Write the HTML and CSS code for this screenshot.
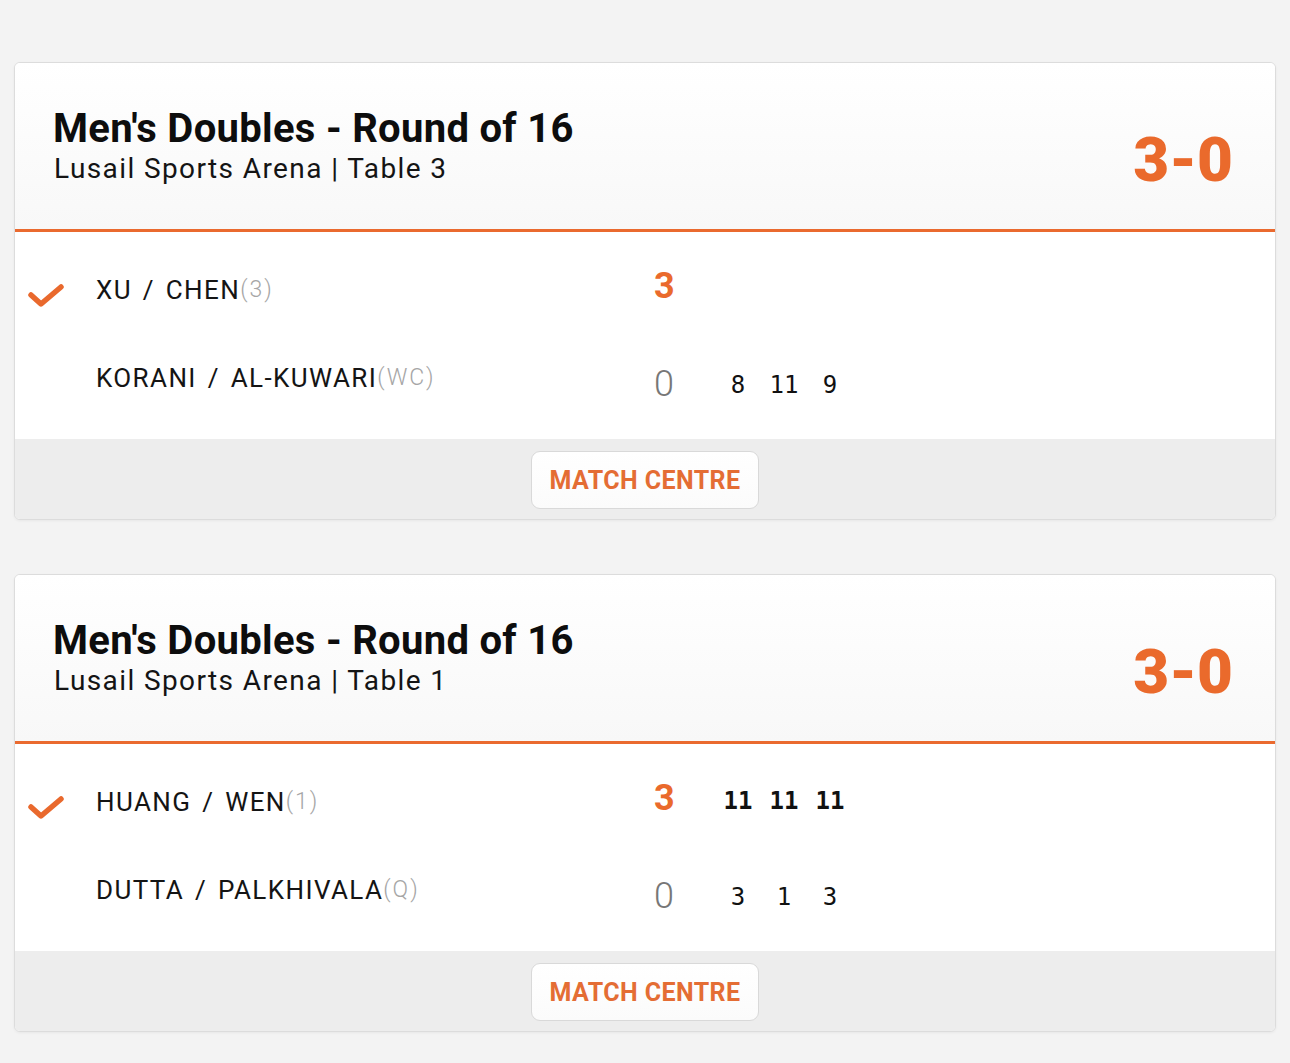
FILE: index.html
```html
<!DOCTYPE html>
<html lang="en">
<head>
<meta charset="utf-8">
<title>Match results</title>
<link rel="stylesheet" href="styles.css">
</head>
<body>
<main class="list">
  <article class="card">
    <header class="card-head">
      <div class="titles">
        <h2 class="title">Men's Doubles - Round of 16</h2>
        <p class="venue">Lusail Sports Arena | Table 3</p>
      </div>
      <div class="final">3-0</div>
    </header>
    <section class="card-body">
      <div class="row win">
        <div class="mark"><svg class="check" viewBox="0 0 36 26" width="36" height="26"><path d="M3 12 L13 21 L33 4" fill="none" stroke="#e9692d" stroke-width="5.5" stroke-linecap="round" stroke-linejoin="round"/></svg></div>
        <div class="name">XU / CHEN<span class="seed">(3)</span></div>
        <div class="total">3</div>
        <div class="sets"></div>
      </div>
      <div class="row lose">
        <div class="mark"></div>
        <div class="name">KORANI / AL-KUWARI<span class="seed">(WC)</span></div>
        <div class="total">0</div>
        <div class="sets"><span class="set">8</span><span class="set">11</span><span class="set">9</span></div>
      </div>
    </section>
    <footer class="card-foot"><a class="btn" href="#">MATCH CENTRE</a></footer>
  </article>

  <article class="card">
    <header class="card-head">
      <div class="titles">
        <h2 class="title">Men's Doubles - Round of 16</h2>
        <p class="venue">Lusail Sports Arena | Table 1</p>
      </div>
      <div class="final">3-0</div>
    </header>
    <section class="card-body">
      <div class="row win">
        <div class="mark"><svg class="check" viewBox="0 0 36 26" width="36" height="26"><path d="M3 12 L13 21 L33 4" fill="none" stroke="#e9692d" stroke-width="5.5" stroke-linecap="round" stroke-linejoin="round"/></svg></div>
        <div class="name">HUANG / WEN<span class="seed">(1)</span></div>
        <div class="total">3</div>
        <div class="sets"><span class="set">11</span><span class="set">11</span><span class="set">11</span></div>
      </div>
      <div class="row lose">
        <div class="mark"></div>
        <div class="name">DUTTA / PALKHIVALA<span class="seed">(Q)</span></div>
        <div class="total">0</div>
        <div class="sets"><span class="set">3</span><span class="set">1</span><span class="set">3</span></div>
      </div>
    </section>
    <footer class="card-foot"><a class="btn" href="#">MATCH CENTRE</a></footer>
  </article>
</main>
</body>
</html>
```

FILE: styles.css
```css
* { box-sizing: border-box; }

html, body {
  margin: 0;
  padding: 0;
}

body {
  background: #f3f3f3;
  font-family: Roboto, "Liberation Sans", Arial, sans-serif;
  color: #111;
  height: 1063px;
  overflow: hidden;
}

.list {
  display: flex;
  flex-direction: column;
  gap: 54px;
  padding: 62px 14px 0 14px;
}

.card {
  background: #fff;
  border: 1px solid #dcdcdc;
  border-radius: 6px;
  overflow: hidden;
  box-shadow: 0 1px 3px rgba(0, 0, 0, 0.05);
}

.card-head {
  display: flex;
  justify-content: space-between;
  align-items: center;
  height: 169px;
  padding: 0 42px 0 38px;
  background: linear-gradient(#ffffff, #f8f8f8);
  border-bottom: 3px solid #ea6a2f;
}

.titles {
  margin-top: 1px;
}

.title {
  margin: 0;
  font-size: 40px;
  line-height: 42px;
  font-weight: 700;
  color: #0d0d0d;
  letter-spacing: 0.3px;
}

.venue {
  margin: 2px 0 0 1px;
  font-size: 28px;
  line-height: 34px;
  font-weight: 400;
  color: #141414;
  letter-spacing: 1.4px;
}

.final {
  margin-top: 28px;
  font-size: 62px;
  line-height: 64px;
  font-weight: 900;
  color: #ea6a2c;
  letter-spacing: 0;
}

.card-body {
  height: 207px;
  padding-top: 15px;
  background: #fff;
}

.row {
  display: grid;
  grid-template-columns: 81px 558px 61px auto;
  align-items: center;
  height: 88px;
}

.mark {
  padding-left: 13px;
  display: flex;
  align-items: center;
}

.row.win .mark {
  margin-top: 10px;
}

.check {
  display: block;
}

.name {
  font-size: 26px;
  line-height: 30px;
  color: #141414;
  letter-spacing: 1.4px;
  word-spacing: 3px;
}

.seed {
  font-size: 23px;
  font-weight: 300;
  color: #a6a6a6;
  letter-spacing: 2px;
  position: relative;
  top: -2px;
}

.total {
  font-size: 36px;
  line-height: 40px;
}

.row.win .total {
  font-weight: 700;
  color: #ea6a2c;
  margin-bottom: 10px;
}

.row.lose .total {
  font-weight: 300;
  color: #777;
  margin-top: 10px;
}

.sets {
  display: flex;
  font-family: "DejaVu Sans Mono", "Liberation Mono", monospace;
  font-size: 24px;
  line-height: 30px;
}

.row.win .sets {
  font-weight: 700;
  margin-bottom: 4px;
}

.row.lose .sets {
  margin-top: 12px;
}

.set {
  width: 46px;
  text-align: center;
}

.card-foot {
  height: 80px;
  background: #ededed;
  display: flex;
  justify-content: center;
  align-items: center;
  padding-top: 2px;
}

.btn {
  display: flex;
  justify-content: center;
  align-items: center;
  width: 228px;
  height: 58px;
  background: linear-gradient(#ffffff, #fbfbfb);
  border: 1px solid #d9d9d9;
  border-radius: 9px;
  color: #e46d34;
  font-size: 25px;
  font-weight: 700;
  text-decoration: none;
  letter-spacing: 0.4px;
}
```
